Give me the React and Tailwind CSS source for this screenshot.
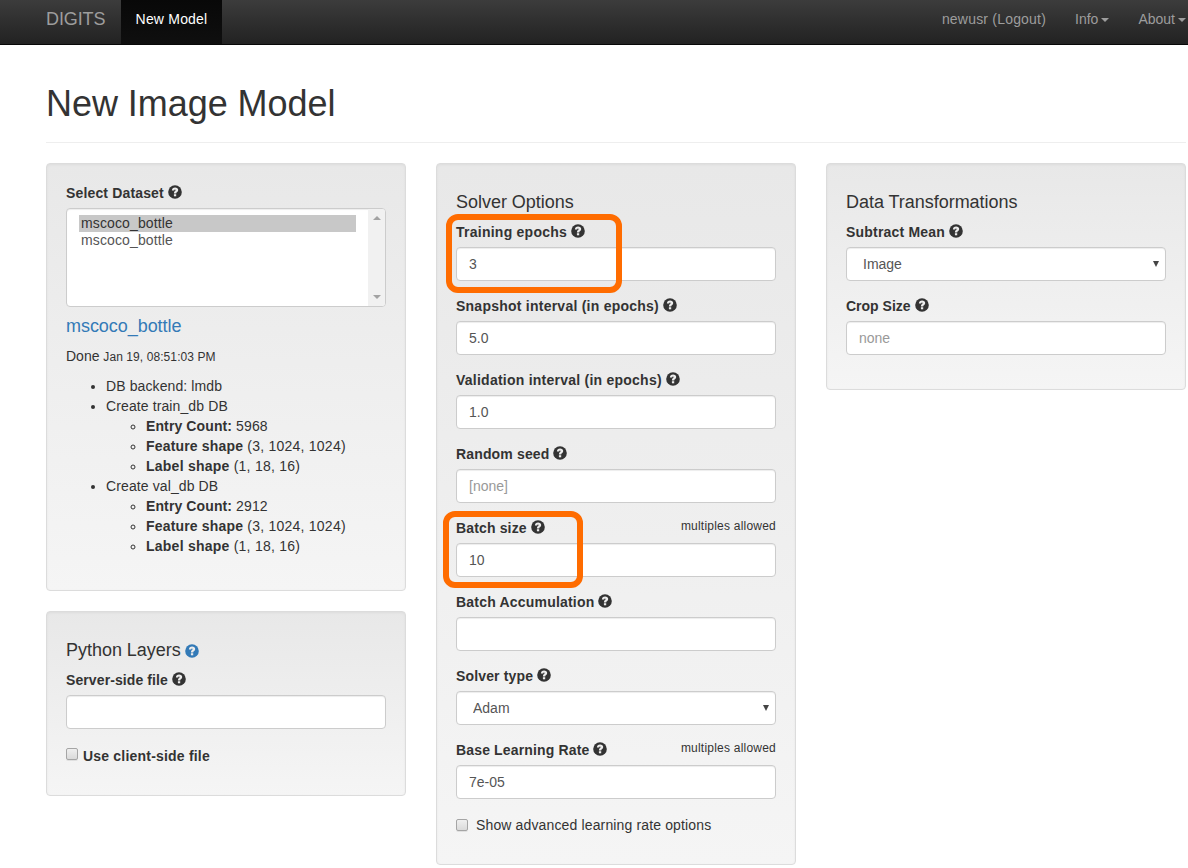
import React from "react";

function HelpIcon({ className = "text-[#333]" }) {
  return (
    <svg viewBox="0 0 14 14" className={`h-3.5 w-3.5 shrink-0 ${className}`}>
      <circle cx="7" cy="7" r="6.8" fill="currentColor" />
      <path
        d="M3.9 5.5C3.9 3.6 5.2 2.5 7.1 2.5c1.8 0 3.1 1 3.1 2.6 0 2-2 2-2 3.3H5.9c0-2.2 1.7-2.3 1.7-3.3 0-.4-.2-.6-.6-.6-.5 0-.8.3-.8 1z"
        fill="#ececec"
      />
      <path d="M5.9 9.2h2.3v2.1H5.9z" fill="#ececec" />
    </svg>
  );
}

function Well({ children, className = "" }) {
  return (
    <section
      className={`w-[360px] rounded border border-[#dcdcdc] bg-linear-to-b from-[#e8e8e8] to-[#f5f5f5] px-[19px] pt-[19px] shadow-[inset_0_1px_3px_rgba(0,0,0,0.05),0_1px_0_rgba(255,255,255,0.1)] ${className}`}
    >
      {children}
    </section>
  );
}

function Heading({ children }) {
  return (
    <h4 className="my-2.5 flex h-[19px] items-center gap-1 text-[18px] leading-[19px] tracking-[-0.03px]">
      {children}
    </h4>
  );
}

function Label({ children, note, tracking = "tracking-[0.15px]" }) {
  return (
    <div className="mb-[5px] flex h-5 justify-between">
      <label className="flex items-center gap-1 font-bold">
        <span className={tracking}>{children}</span>
        <HelpIcon className="-mt-0.5 text-[#333]" />
      </label>
      {note && <small className="-mt-0.5 text-[12px] leading-5 tracking-[0.22px]">{note}</small>}
    </div>
  );
}

const control =
  "block h-[34px] w-full rounded border border-[#ccc] bg-white px-3 text-[14px] text-[#555] shadow-[inset_0_1px_1px_rgba(0,0,0,0.075)] outline-none placeholder:text-[#999]";

function Field({ label, note, value, placeholder, tracking, highlight }) {
  return (
    <div className="relative mb-[15px]">
      <Label note={note} tracking={tracking}>{label}</Label>
      <input className={control} defaultValue={value} placeholder={placeholder} />
      {highlight && (
        <div className={`pointer-events-none absolute rounded-[12px] border-6 border-[#ff6c00] ${highlight}`} />
      )}
    </div>
  );
}

function SelectField({ label, options, tracking }) {
  return (
    <div className="mb-[15px]">
      <Label tracking={tracking}>{label}</Label>
      <div className="relative">
        <select className={`${control} appearance-none pl-4`}>
          {options.map((o) => (
            <option key={o}>{o}</option>
          ))}
        </select>
        <svg viewBox="0 0 6 6" className="pointer-events-none absolute top-[14px] right-[7px] h-1.5 w-1.5">
          <path d="M0 0h6L3 6z" fill="#444" />
        </svg>
      </div>
    </div>
  );
}

function Checkbox({ className = "" }) {
  return (
    <input
      type="checkbox"
      className={`h-3 w-3 shrink-0 appearance-none rounded-[2px] border border-[#a5a5a5] bg-linear-to-b from-[#efefef] to-[#dadada] shadow-[0_1px_0_rgba(0,0,0,0.08)] ${className}`}
    />
  );
}

function DbItem({ name, count }) {
  return (
    <li>
      Create {name} DB
      <ul className="list-[circle] pl-10">
        <li><b>Entry Count:</b> {count}</li>
        <li className="tracking-[0.24px]"><b className="tracking-[0.17px]">Feature shape</b> (3, 1024, 1024)</li>
        <li className="tracking-[0.24px]"><b>Label shape</b> (1, 18, 16)</li>
      </ul>
    </li>
  );
}

function Caret() {
  return <span className="ml-[3px] inline-block border-x-4 border-t-4 border-x-transparent border-t-[#9d9d9d] align-middle" />;
}

function Navbar() {
  return (
    <nav className="flex h-[45px] border-b border-[#080808] bg-linear-to-b from-[#3c3c3c] to-[#222] pl-[46px] text-[14px] leading-5 whitespace-nowrap text-[#9d9d9d]">
      <a className="w-[75px] pt-[9px] text-[18px] tracking-[-0.1px]">DIGITS</a>
      <a className="w-[101px] bg-linear-to-b from-[#080808] to-[#0f0f0f] pt-[9px] text-center tracking-[0.2px] text-white">New Model</a>
      <div className="ml-auto flex gap-[29px] pt-[9px] pr-[2px]">
        <a className="tracking-[0.2px]">newusr (Logout)</a>
        <a>Info<Caret /></a>
        <a>About<Caret /></a>
      </div>
    </nav>
  );
}

export default function App() {
  return (
    <div className="h-[868px] w-[1188px] overflow-hidden bg-white font-['Liberation_Sans',Arial,sans-serif] text-[14px] leading-5 text-[#333]">
      <Navbar />
      <main className="pt-[39px] pr-0.5 pl-[46px]">
        <h1 className="mb-5 h-[59px] border-b border-[#eee] text-[36px] leading-10 tracking-[-0.05px]">New Image Model</h1>
        <div className="flex items-start gap-[30px]">
          <div className="flex flex-col gap-5">
            <Well className="h-[428px]">
              <Label>Select Dataset</Label>
              <div className="flex h-[99px] overflow-hidden rounded border border-[#ccc] bg-white text-[#555] shadow-[inset_0_1px_1px_rgba(0,0,0,0.075)]">
                <ul className="flex-1 pt-1.5 pr-3 pl-3 leading-[17px] tracking-[0.13px]">
                  <li className="bg-[#c8c8c8] pl-0.5 text-[#333]">mscoco_bottle</li>
                  <li className="pl-0.5">mscoco_bottle</li>
                </ul>
                <div className="flex w-[17px] flex-col items-center justify-between bg-[#f1f1f1] py-[7px]">
                  <span className="border-x-4 border-b-4 border-x-transparent border-b-[#a3a3a3]" />
                  <span className="border-x-4 border-t-4 border-x-transparent border-t-[#a3a3a3]" />
                </div>
              </div>
              <h4 className="mt-[9px] mb-2.5 text-[18px] leading-5 tracking-[-0.05px] text-[#337ab7]">mscoco_bottle</h4>
              <p className="mb-[9px]">Done <small className="text-[12px] tracking-[0.08px]">Jan 19, 08:51:03 PM</small></p>
              <ul className="list-disc pl-10 tracking-[0.11px]">
                <li>DB backend: lmdb</li>
                <DbItem name="train_db" count="5968" />
                <DbItem name="val_db" count="2912" />
              </ul>
            </Well>
            <Well className="h-[185px]">
              <Heading>
                Python Layers
                <HelpIcon className="text-[#337ab7]" />
              </Heading>
              <Field label="Server-side file" tracking="tracking-[0.1px]" />
              <label className="flex items-center gap-[5px] pt-0.5 font-bold tracking-[0.2px]">
                <Checkbox className="-mt-1" />
                Use client-side file
              </label>
            </Well>
          </div>
          <Well className="h-[702px]">
            <Heading>Solver Options</Heading>
            <Field label="Training epochs" tracking="tracking-[0.25px]" value="3" highlight="-top-2 -left-2.5 h-[79px] w-[176px]" />
            <Field label="Snapshot interval (in epochs)" tracking="tracking-[0.24px]" value="5.0" />
            <Field label="Validation interval (in epochs)" tracking="tracking-[0.24px]" value="1.0" />
            <Field label="Random seed" placeholder="[none]" />
            <Field label="Batch size" note="multiples allowed" value="10" highlight="-top-[7px] -left-[13px] h-[77px] w-[140px]" />
            <Field label="Batch Accumulation" tracking="tracking-[0.2px]" />
            <SelectField label="Solver type" options={["Adam"]} />
            <Field label="Base Learning Rate" note="multiples allowed" value="7e-05" />
            <label className="flex items-center gap-2 pt-px tracking-[0.14px]">
              <Checkbox />
              Show advanced learning rate options
            </label>
          </Well>
          <Well className="h-[227px]">
            <Heading>Data Transformations</Heading>
            <SelectField label="Subtract Mean" tracking="tracking-[0.2px]" options={["Image"]} />
            <Field label="Crop Size" tracking="tracking-[0px]" placeholder="none" />
          </Well>
        </div>
      </main>
    </div>
  );
}
